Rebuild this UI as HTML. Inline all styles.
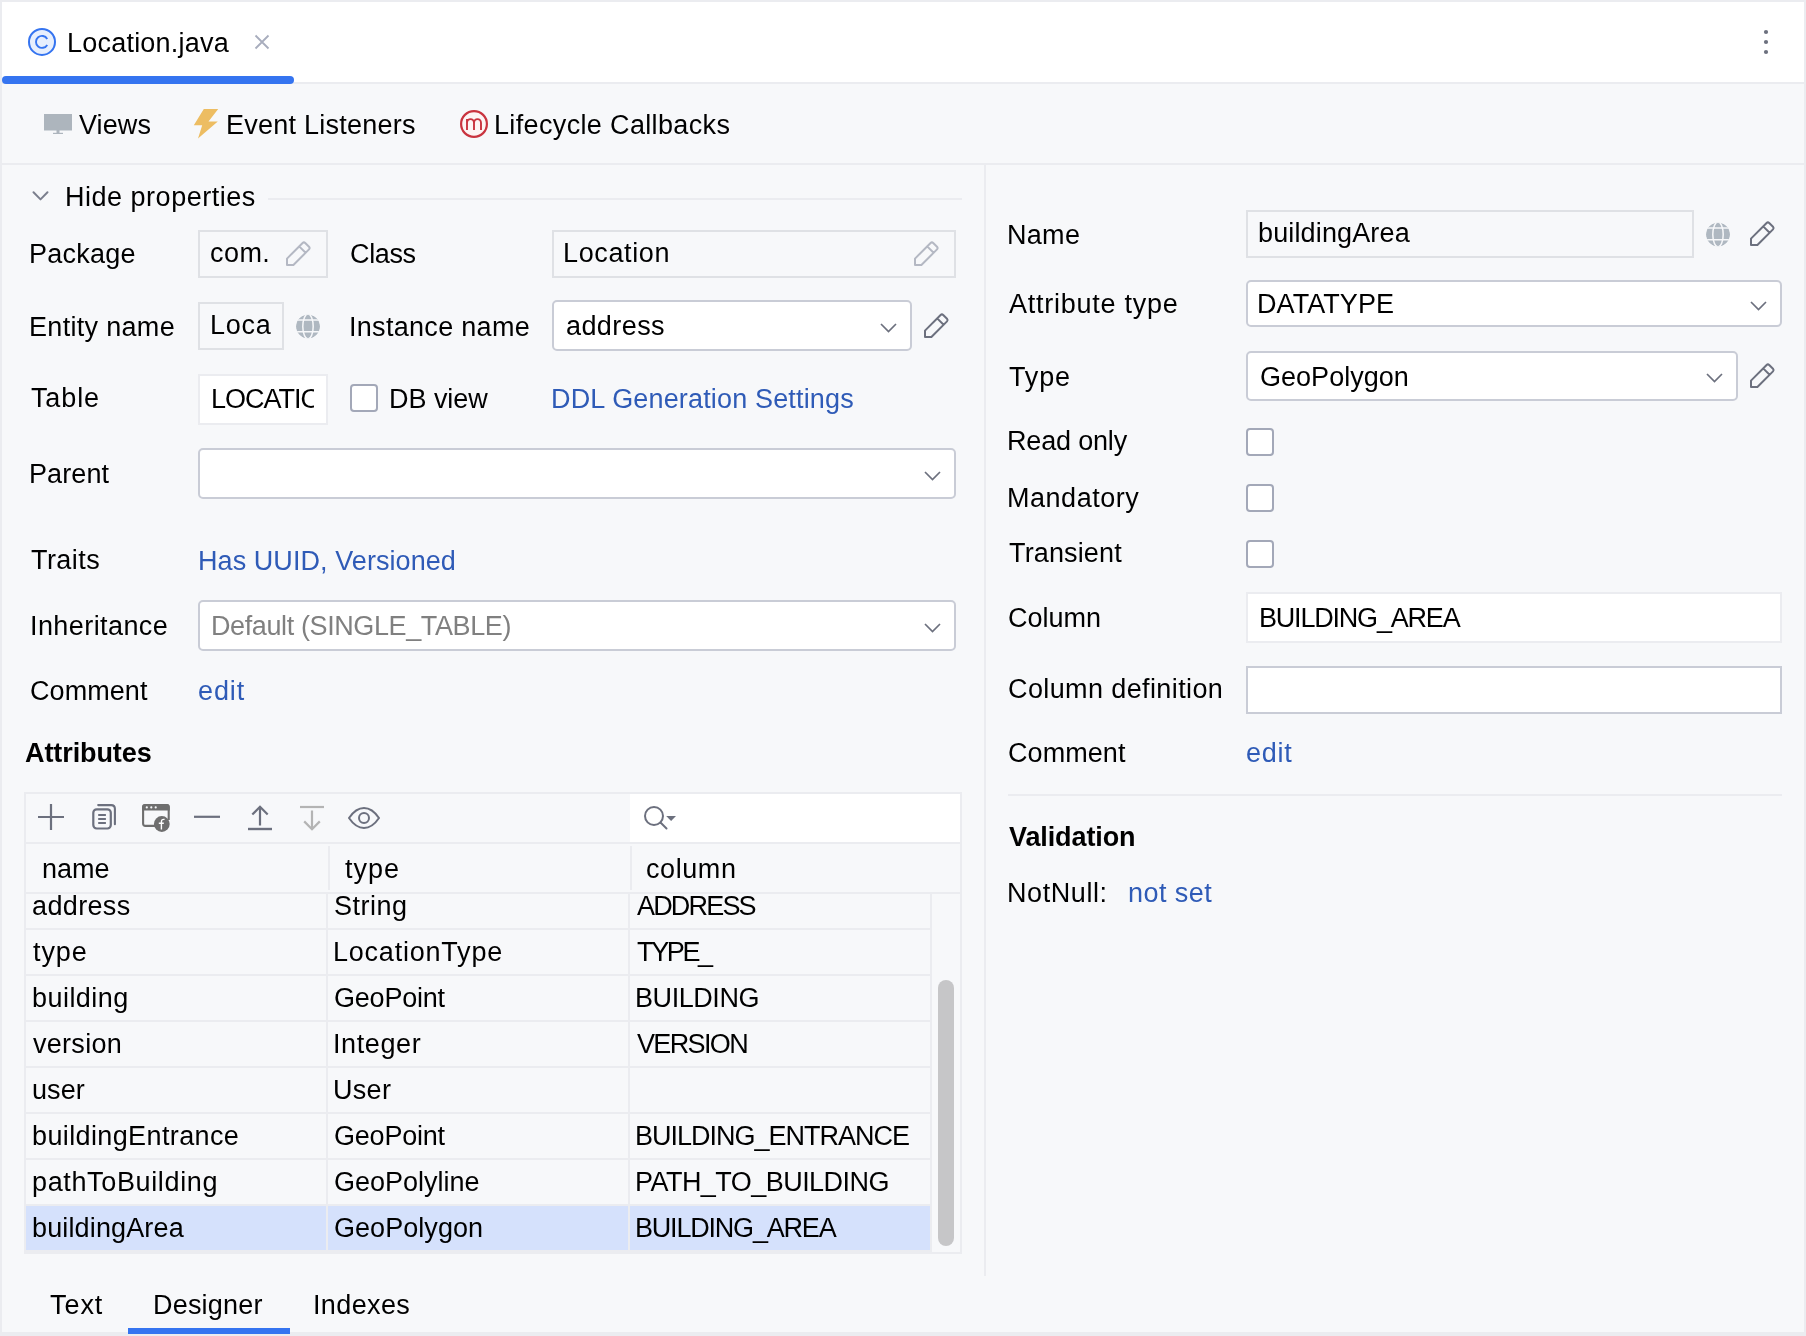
<!DOCTYPE html>
<html><head><meta charset="utf-8">
<style>
html,body{margin:0;padding:0;}
body{width:1806px;height:1336px;position:relative;overflow:hidden;background:#f7f8fa;font-family:"Liberation Sans",sans-serif;color:#000;}
.a{position:absolute;}
.t{position:absolute;font-size:27px;line-height:27px;white-space:pre;will-change:transform;}
.lk{color:#2f5bb7;}
.fld{position:absolute;box-sizing:border-box;}
.ro{border:2px solid #dfe1e5;background:#f7f8fa;}
.wf{border:2px solid #ebecf0;background:#fff;}
.dd{border:2px solid #c9ccd6;background:#fff;border-radius:5px;}
.cb{position:absolute;box-sizing:border-box;width:28px;height:28px;border:2px solid #a3a8b8;border-radius:4px;background:#fff;}
.hl{position:absolute;background:#ebecf0;}
svg{position:absolute;overflow:visible;}
</style></head>
<body>
<div class="hl" style="left:0;top:0;width:1806px;height:2px;"></div>
<div class="hl" style="left:0;top:0;width:2px;height:1336px;"></div>
<div class="hl" style="left:1804px;top:0;width:2px;height:1336px;"></div>
<div class="hl" style="left:0;top:1332px;width:1806px;height:4px;"></div>
<div class="a" style="left:2px;top:2px;width:1802px;height:80px;background:#fff;"></div>
<div class="hl" style="left:2px;top:82px;width:1802px;height:2px;"></div>
<div class="a" style="left:2px;top:76px;width:292px;height:8px;border-radius:4px;background:#3574f0;"></div>
<svg style="left:28px;top:28px" width="28" height="28" viewBox="0 0 28 28"><circle cx="14" cy="13.9" r="13" fill="#e7effd" stroke="#3574f0" stroke-width="2"/><path d="M19.2 10.9 A6 6 0 1 0 19.2 16.9" fill="none" stroke="#3574f0" stroke-width="1.9"/></svg>
<div class="t" style="left:67.1px;top:30.3px;letter-spacing:0.22px;">Location.java</div>
<svg style="left:255px;top:35px" width="14" height="14" viewBox="0 0 14 14"><path d="M0.5 0.5L13.5 13.5M13.5 0.5L0.5 13.5" stroke="#a8adbd" stroke-width="1.8"/></svg>
<svg style="left:1762px;top:28px" width="8" height="28" viewBox="0 0 8 28"><circle cx="4" cy="4" r="2.1" fill="#6c707e"/><circle cx="4" cy="14" r="2.1" fill="#6c707e"/><circle cx="4" cy="24" r="2.1" fill="#6c707e"/></svg>
<div class="hl" style="left:2px;top:163px;width:1802px;height:2px;"></div>
<svg style="left:44px;top:114px" width="28" height="20" viewBox="0 0 28 20"><rect x="0" y="0" width="28" height="16.5" fill="#adb5bd"/><rect x="12.5" y="16" width="3" height="3" fill="#adb5bd"/><rect x="9" y="18.8" width="10" height="1.2" fill="#adb5bd"/></svg>
<div class="t" style="left:79.3px;top:112.2px;letter-spacing:0.09px;">Views</div>
<svg style="left:193px;top:108px" width="26" height="31" viewBox="0 0 26 31"><path d="M10.8 0.9 L25.2 0.9 L15.5 13.6 L24.8 13.6 L5 30.4 L9.2 17.2 L0.8 17.2 Z" fill="#edbd62"/></svg>
<div class="t" style="left:225.7px;top:112.2px;letter-spacing:0.24px;">Event Listeners</div>
<svg style="left:460px;top:110px" width="28" height="28" viewBox="0 0 28 28"><circle cx="14" cy="14" r="12.9" fill="#fdf5f5" stroke="#c9343f" stroke-width="2.2"/><path d="M7 19.9V9M7 13A3.5 3.9 0 0 1 14 13V19.9M14 13A3.5 3.9 0 0 1 21 13V19.9" fill="none" stroke="#c9343f" stroke-width="1.9"/></svg>
<div class="t" style="left:493.6px;top:111.9px;letter-spacing:0.35px;">Lifecycle Callbacks</div>
<div class="hl" style="left:984px;top:165px;width:2px;height:1111px;"></div>
<svg style="left:31.5px;top:191px" width="17" height="10" viewBox="0 0 17 10"><path d="M1.5 1.3L8.5 8.4L15.5 1.3" fill="none" stroke="#7b7f8d" stroke-width="2" stroke-linecap="round" stroke-linejoin="round"/></svg>
<div class="t" style="left:65.3px;top:183.7px;letter-spacing:0.51px;">Hide properties</div>
<div class="hl" style="left:268px;top:198px;width:694px;height:2px;"></div>
<div class="t" style="left:29.0px;top:241.3px;letter-spacing:0.24px;">Package</div>
<div class="fld ro" style="left:198px;top:230px;width:130px;height:48px;"></div>
<div class="t" style="left:210.2px;top:239.6px;letter-spacing:0.43px;">com.</div>
<svg style="left:286px;top:241px" width="25" height="25" viewBox="0 0 25 25"><path d="M1 17.6 L16.6 2 Q17.9 0.8 19.2 2 L23 5.8 Q24.2 7.1 23 8.4 L7.4 24 L1 24 Z M13.2 5.4 L19.6 11.8" fill="none" stroke="#b4b8c3" stroke-width="2" stroke-linejoin="round"/></svg>
<div class="t" style="left:350.3px;top:241.3px;letter-spacing:-0.35px;">Class</div>
<div class="fld ro" style="left:552px;top:230px;width:404px;height:48px;"></div>
<div class="t" style="left:563.1px;top:239.6px;letter-spacing:0.63px;">Location</div>
<svg style="left:914px;top:241px" width="25" height="25" viewBox="0 0 25 25"><path d="M1 17.6 L16.6 2 Q17.9 0.8 19.2 2 L23 5.8 Q24.2 7.1 23 8.4 L7.4 24 L1 24 Z M13.2 5.4 L19.6 11.8" fill="none" stroke="#b4b8c3" stroke-width="2" stroke-linejoin="round"/></svg>
<div class="t" style="left:29.3px;top:313.7px;letter-spacing:0.31px;">Entity name</div>
<div class="fld ro" style="left:198px;top:302px;width:86px;height:48px;overflow:hidden;"><div class="t" style="left:9.6px;top:7.8px;letter-spacing:0.75px;">Location</div><div class="a" style="left:71px;top:0;width:13px;height:44px;background:#f7f8fa;"></div></div>
<svg style="left:296px;top:314px" width="24" height="25" viewBox="0 0 24 25"><defs><clipPath id="gc296"><circle cx="12" cy="12.5" r="12"/></clipPath></defs><g clip-path="url(#gc296)"><circle cx="12" cy="12.5" r="12" fill="#afb8c1"/><ellipse cx="12" cy="12.5" rx="5.2" ry="12.4" fill="none" stroke="#f7f8fa" stroke-width="1.5"/><path d="M0 6.1H24M0 17.8H24" stroke="#f7f8fa" stroke-width="1.5"/></g></svg>
<div class="t" style="left:348.9px;top:314.0px;letter-spacing:0.30px;">Instance name</div>
<div class="fld dd" style="left:552px;top:300px;width:360px;height:51px;"></div>
<div class="t" style="left:566.0px;top:313.0px;letter-spacing:0.42px;">address</div>
<svg style="left:880px;top:323px" width="17" height="10" viewBox="0 0 17 10"><path d="M1 1L8.5 8.5L16 1" fill="none" stroke="#6c707e" stroke-width="1.7"/></svg>
<svg style="left:924px;top:313px" width="25" height="25" viewBox="0 0 25 25"><path d="M1 17.6 L16.6 2 Q17.9 0.8 19.2 2 L23 5.8 Q24.2 7.1 23 8.4 L7.4 24 L1 24 Z M13.2 5.4 L19.6 11.8" fill="none" stroke="#6c707e" stroke-width="2" stroke-linejoin="round"/></svg>
<div class="t" style="left:31.0px;top:385.3px;letter-spacing:0.87px;">Table</div>
<div class="fld wf" style="left:198px;top:374px;width:130px;height:51px;overflow:hidden;"><div class="t" style="left:11.2px;top:9.9px;letter-spacing:-1.00px;">LOCATION</div><div class="a" style="left:114px;top:0;width:14px;height:47px;background:#fff;"></div></div>
<div class="cb" style="left:350px;top:384px;"></div>
<div class="t" style="left:389.3px;top:385.9px;letter-spacing:-0.04px;">DB view</div>
<div class="t lk" style="left:551.4px;top:385.5px;letter-spacing:0.16px;">DDL Generation Settings</div>
<div class="t" style="left:29.0px;top:461.3px;letter-spacing:0.11px;">Parent</div>
<div class="fld dd" style="left:198px;top:448px;width:758px;height:51px;"></div>
<svg style="left:924px;top:471px" width="17" height="10" viewBox="0 0 17 10"><path d="M1 1L8.5 8.5L16 1" fill="none" stroke="#6c707e" stroke-width="1.7"/></svg>
<div class="t" style="left:31.0px;top:547.3px;letter-spacing:0.44px;">Traits</div>
<div class="t lk" style="left:197.5px;top:547.7px;letter-spacing:0.07px;">Has UUID, Versioned</div>
<div class="t" style="left:29.5px;top:613.4px;letter-spacing:0.42px;">Inheritance</div>
<div class="fld dd" style="left:198px;top:600px;width:758px;height:51px;"></div>
<div class="t" style="left:211.0px;top:613.4px;letter-spacing:-0.39px;color:#808080;">Default (SINGLE_TABLE)</div>
<svg style="left:924px;top:623px" width="17" height="10" viewBox="0 0 17 10"><path d="M1 1L8.5 8.5L16 1" fill="none" stroke="#6c707e" stroke-width="1.7"/></svg>
<div class="t" style="left:30.2px;top:678.0px;letter-spacing:0.06px;">Comment</div>
<div class="t lk" style="left:197.5px;top:677.8px;letter-spacing:0.89px;">edit</div>
<div class="t" style="left:25.0px;top:740.0px;letter-spacing:-0.09px;font-weight:bold;">Attributes</div>
<div class="a" style="left:24px;top:792px;width:938px;height:462px;box-sizing:border-box;border:2px solid #ebecf0;"></div>
<div class="a" style="left:630px;top:794px;width:330px;height:48px;background:#fff;"></div>
<div class="hl" style="left:26px;top:842px;width:934px;height:2px;"></div>
<div class="hl" style="left:26px;top:892px;width:934px;height:2px;"></div>
<div class="hl" style="left:328px;top:846px;width:2px;height:44px;"></div>
<div class="hl" style="left:630px;top:846px;width:2px;height:44px;"></div>
<svg style="left:38px;top:804px" width="26" height="26" viewBox="0 0 26 26"><path d="M0 13H26M13 0V26" stroke="#6c707e" stroke-width="2.2"/></svg>
<svg style="left:91px;top:803px" width="26" height="28" viewBox="0 0 26 28"><path d="M7.2 2.1 H20.2 Q23.9 2.1 23.9 5.8 V21.2" fill="none" stroke="#6c707e" stroke-width="2.1" stroke-linecap="round"/><rect x="2.3" y="6.3" width="17.5" height="19.2" rx="3.4" fill="none" stroke="#6c707e" stroke-width="2.2"/><path d="M7.2 12H14.9M7.2 16H14.9M7.2 20H14.9" stroke="#6c707e" stroke-width="1.9"/></svg>
<svg style="left:142px;top:804px" width="30" height="30" viewBox="0 0 30 30"><path d="M18 21.9 H3.4 Q1.1 21.9 1.1 19.6 V3.4 Q1.1 1.1 3.4 1.1 H24.4 Q26.7 1.1 26.7 3.4 V16" fill="none" stroke="#6e6e6e" stroke-width="2.1"/><path d="M0.05 6.6 V3 Q0.05 0.1 3 0.1 H24.8 Q27.75 0.1 27.75 3 V6.6 Z" fill="#6e6e6e"/><circle cx="4.8" cy="3.4" r="1.1" fill="#f7f8fa"/><circle cx="9.3" cy="3.4" r="1.1" fill="#f7f8fa"/><circle cx="13.7" cy="3.4" r="1.1" fill="#f7f8fa"/><circle cx="19.8" cy="20" r="7.9" fill="#6e6e6e"/><path d="M22.6 15.4 Q19.4 14.9 19.4 17.9 V25.6 M16.8 19.2 H21.8" fill="none" stroke="#fff" stroke-width="1.4"/></svg>
<svg style="left:194px;top:815px" width="26" height="4" viewBox="0 0 26 4"><path d="M0 1.8H26" stroke="#6c707e" stroke-width="2.2"/></svg>
<svg style="left:248px;top:805px" width="24" height="26" viewBox="0 0 24 26"><path d="M0 24H24" stroke="#6c707e" stroke-width="2.4"/><path d="M12 20.5V2M4.3 9.6L12 1.8L19.7 9.6" fill="none" stroke="#6c707e" stroke-width="2.2"/></svg>
<svg style="left:300px;top:805px" width="24" height="26" viewBox="0 0 24 26"><path d="M0 2H24" stroke="#b4b4b4" stroke-width="2.2"/><path d="M12 5.4V24M4.2 16.4L12 24.2L19.8 16.4" fill="none" stroke="#b4b4b4" stroke-width="2.2"/></svg>
<svg style="left:347px;top:806px" width="34" height="24" viewBox="0 0 34 24"><path d="M2 12 Q8.8 2 17 2 Q25.2 2 32 12 Q25.2 22 17 22 Q8.8 22 2 12 Z" fill="none" stroke="#6c707e" stroke-width="2"/><circle cx="17" cy="12" r="5" fill="none" stroke="#6c707e" stroke-width="2"/></svg>
<svg style="left:643px;top:805px" width="34" height="26" viewBox="0 0 34 26"><circle cx="11" cy="11" r="9" fill="none" stroke="#6c707e" stroke-width="2"/><path d="M17.5 17.5L23.5 23.5" stroke="#6c707e" stroke-width="2" stroke-linecap="round"/><path d="M23.2 11H33L28.1 15.9Z" fill="#6c707e"/></svg>
<div class="t" style="left:42.3px;top:855.9px;letter-spacing:0.03px;">name</div>
<div class="t" style="left:344.9px;top:855.9px;letter-spacing:1.03px;">type</div>
<div class="t" style="left:645.7px;top:855.5px;letter-spacing:0.58px;">column</div>
<div class="a" style="left:26px;top:1206px;width:904px;height:44px;background:#d5e1fc;"></div>
<div class="hl" style="left:26px;top:928px;width:904px;height:2px;"></div>
<div class="hl" style="left:26px;top:974px;width:904px;height:2px;"></div>
<div class="hl" style="left:26px;top:1020px;width:904px;height:2px;"></div>
<div class="hl" style="left:26px;top:1066px;width:904px;height:2px;"></div>
<div class="hl" style="left:26px;top:1112px;width:904px;height:2px;"></div>
<div class="hl" style="left:26px;top:1158px;width:904px;height:2px;"></div>
<div class="hl" style="left:26px;top:1204px;width:904px;height:2px;"></div>
<div class="hl" style="left:26px;top:1250px;width:906px;height:2px;"></div>
<div class="hl" style="left:326px;top:894px;width:2px;height:356px;"></div>
<div class="hl" style="left:628px;top:894px;width:2px;height:356px;"></div>
<div class="hl" style="left:930px;top:894px;width:2px;height:358px;"></div>
<div class="a" style="left:938px;top:980px;width:16px;height:266px;border-radius:8px;background:#c6c6c8;"></div>
<div class="t" style="left:32.0px;top:893.4px;letter-spacing:0.36px;">address</div>
<div class="t" style="left:334.0px;top:893.4px;letter-spacing:0.50px;">String</div>
<div class="t" style="left:636.7px;top:893.4px;letter-spacing:-1.82px;">ADDRESS</div>
<div class="t" style="left:33.0px;top:939.4px;letter-spacing:0.93px;">type</div>
<div class="t" style="left:333.0px;top:939.4px;letter-spacing:0.78px;">LocationType</div>
<div class="t" style="left:636.7px;top:939.4px;letter-spacing:-2.35px;">TYPE_</div>
<div class="t" style="left:32.0px;top:985.4px;letter-spacing:0.46px;">building</div>
<div class="t" style="left:334.0px;top:985.4px;letter-spacing:-0.21px;">GeoPoint</div>
<div class="t" style="left:634.7px;top:985.4px;letter-spacing:-0.43px;">BUILDING</div>
<div class="t" style="left:33.0px;top:1031.4px;letter-spacing:0.28px;">version</div>
<div class="t" style="left:333.0px;top:1031.4px;letter-spacing:0.61px;">Integer</div>
<div class="t" style="left:636.7px;top:1031.4px;letter-spacing:-1.64px;">VERSION</div>
<div class="t" style="left:32.0px;top:1077.4px;letter-spacing:0.06px;">user</div>
<div class="t" style="left:333.0px;top:1077.4px;letter-spacing:0.30px;">User</div>
<div class="t" style="left:32.0px;top:1123.4px;letter-spacing:0.38px;">buildingEntrance</div>
<div class="t" style="left:334.0px;top:1123.4px;letter-spacing:-0.21px;">GeoPoint</div>
<div class="t" style="left:634.7px;top:1123.4px;letter-spacing:-1.00px;">BUILDING_ENTRANCE</div>
<div class="t" style="left:32.0px;top:1169.4px;letter-spacing:0.64px;">pathToBuilding</div>
<div class="t" style="left:334.0px;top:1169.4px;">GeoPolyline</div>
<div class="t" style="left:634.7px;top:1169.4px;letter-spacing:-0.54px;">PATH_TO_BUILDING</div>
<div class="t" style="left:32.0px;top:1215.4px;letter-spacing:0.14px;">buildingArea</div>
<div class="t" style="left:334.0px;top:1215.4px;letter-spacing:0.05px;">GeoPolygon</div>
<div class="t" style="left:634.7px;top:1215.4px;letter-spacing:-1.20px;">BUILDING_AREA</div>
<div class="t" style="left:49.5px;top:1291.6px;letter-spacing:0.93px;">Text</div>
<div class="t" style="left:153.2px;top:1291.6px;letter-spacing:0.19px;">Designer</div>
<div class="t" style="left:313.0px;top:1291.6px;letter-spacing:0.37px;">Indexes</div>
<div class="a" style="left:128px;top:1328px;width:162px;height:6px;background:#3574f0;"></div>
<div class="t" style="left:1007.3px;top:221.5px;letter-spacing:0.30px;">Name</div>
<div class="fld ro" style="left:1246px;top:210px;width:448px;height:48px;"></div>
<div class="t" style="left:1258.4px;top:219.6px;letter-spacing:0.14px;">buildingArea</div>
<svg style="left:1706px;top:222px" width="24" height="25" viewBox="0 0 24 25"><defs><clipPath id="gc1706"><circle cx="12" cy="12.5" r="12"/></clipPath></defs><g clip-path="url(#gc1706)"><circle cx="12" cy="12.5" r="12" fill="#afb8c1"/><ellipse cx="12" cy="12.5" rx="5.2" ry="12.4" fill="none" stroke="#f7f8fa" stroke-width="1.5"/><path d="M0 6.1H24M0 17.8H24" stroke="#f7f8fa" stroke-width="1.5"/></g></svg>
<svg style="left:1750px;top:221px" width="25" height="25" viewBox="0 0 25 25"><path d="M1 17.6 L16.6 2 Q17.9 0.8 19.2 2 L23 5.8 Q24.2 7.1 23 8.4 L7.4 24 L1 24 Z M13.2 5.4 L19.6 11.8" fill="none" stroke="#6c707e" stroke-width="2" stroke-linejoin="round"/></svg>
<div class="t" style="left:1009.3px;top:291.4px;letter-spacing:0.75px;">Attribute type</div>
<div class="fld dd" style="left:1246px;top:280px;width:536px;height:47px;"></div>
<div class="t" style="left:1257.4px;top:291.4px;letter-spacing:0.07px;">DATATYPE</div>
<svg style="left:1750px;top:301px" width="17" height="10" viewBox="0 0 17 10"><path d="M1 1L8.5 8.5L16 1" fill="none" stroke="#6c707e" stroke-width="1.7"/></svg>
<div class="t" style="left:1009.3px;top:363.7px;letter-spacing:0.86px;">Type</div>
<div class="fld dd" style="left:1246px;top:351px;width:492px;height:50px;"></div>
<div class="t" style="left:1260.1px;top:363.7px;letter-spacing:0.03px;">GeoPolygon</div>
<svg style="left:1706px;top:373px" width="17" height="10" viewBox="0 0 17 10"><path d="M1 1L8.5 8.5L16 1" fill="none" stroke="#6c707e" stroke-width="1.7"/></svg>
<svg style="left:1750px;top:363px" width="25" height="25" viewBox="0 0 25 25"><path d="M1 17.6 L16.6 2 Q17.9 0.8 19.2 2 L23 5.8 Q24.2 7.1 23 8.4 L7.4 24 L1 24 Z M13.2 5.4 L19.6 11.8" fill="none" stroke="#6c707e" stroke-width="2" stroke-linejoin="round"/></svg>
<div class="t" style="left:1007.3px;top:427.8px;letter-spacing:-0.18px;">Read only</div>
<div class="cb" style="left:1246px;top:428px;"></div>
<div class="t" style="left:1007.3px;top:484.5px;letter-spacing:0.53px;">Mandatory</div>
<div class="cb" style="left:1246px;top:484px;"></div>
<div class="t" style="left:1009.3px;top:539.7px;letter-spacing:0.14px;">Transient</div>
<div class="cb" style="left:1246px;top:540px;"></div>
<div class="t" style="left:1008.3px;top:604.5px;">Column</div>
<div class="fld wf" style="left:1246px;top:592px;width:536px;height:51px;"></div>
<div class="t" style="left:1259.1px;top:604.6px;letter-spacing:-1.20px;">BUILDING_AREA</div>
<div class="t" style="left:1008.3px;top:675.8px;letter-spacing:0.39px;">Column definition</div>
<div class="fld" style="left:1246px;top:666px;width:536px;height:48px;border:2px solid #c9ccd6;background:#fff;"></div>
<div class="t" style="left:1008.3px;top:739.6px;letter-spacing:0.06px;">Comment</div>
<div class="t lk" style="left:1245.5px;top:739.6px;letter-spacing:0.76px;">edit</div>
<div class="hl" style="left:1008px;top:794px;width:774px;height:2px;"></div>
<div class="t" style="left:1009.0px;top:824.0px;letter-spacing:-0.11px;font-weight:bold;">Validation</div>
<div class="t" style="left:1007.3px;top:880.0px;letter-spacing:0.57px;">NotNull:</div>
<div class="t lk" style="left:1128.4px;top:880.0px;letter-spacing:0.44px;">not set</div>
</body></html>
